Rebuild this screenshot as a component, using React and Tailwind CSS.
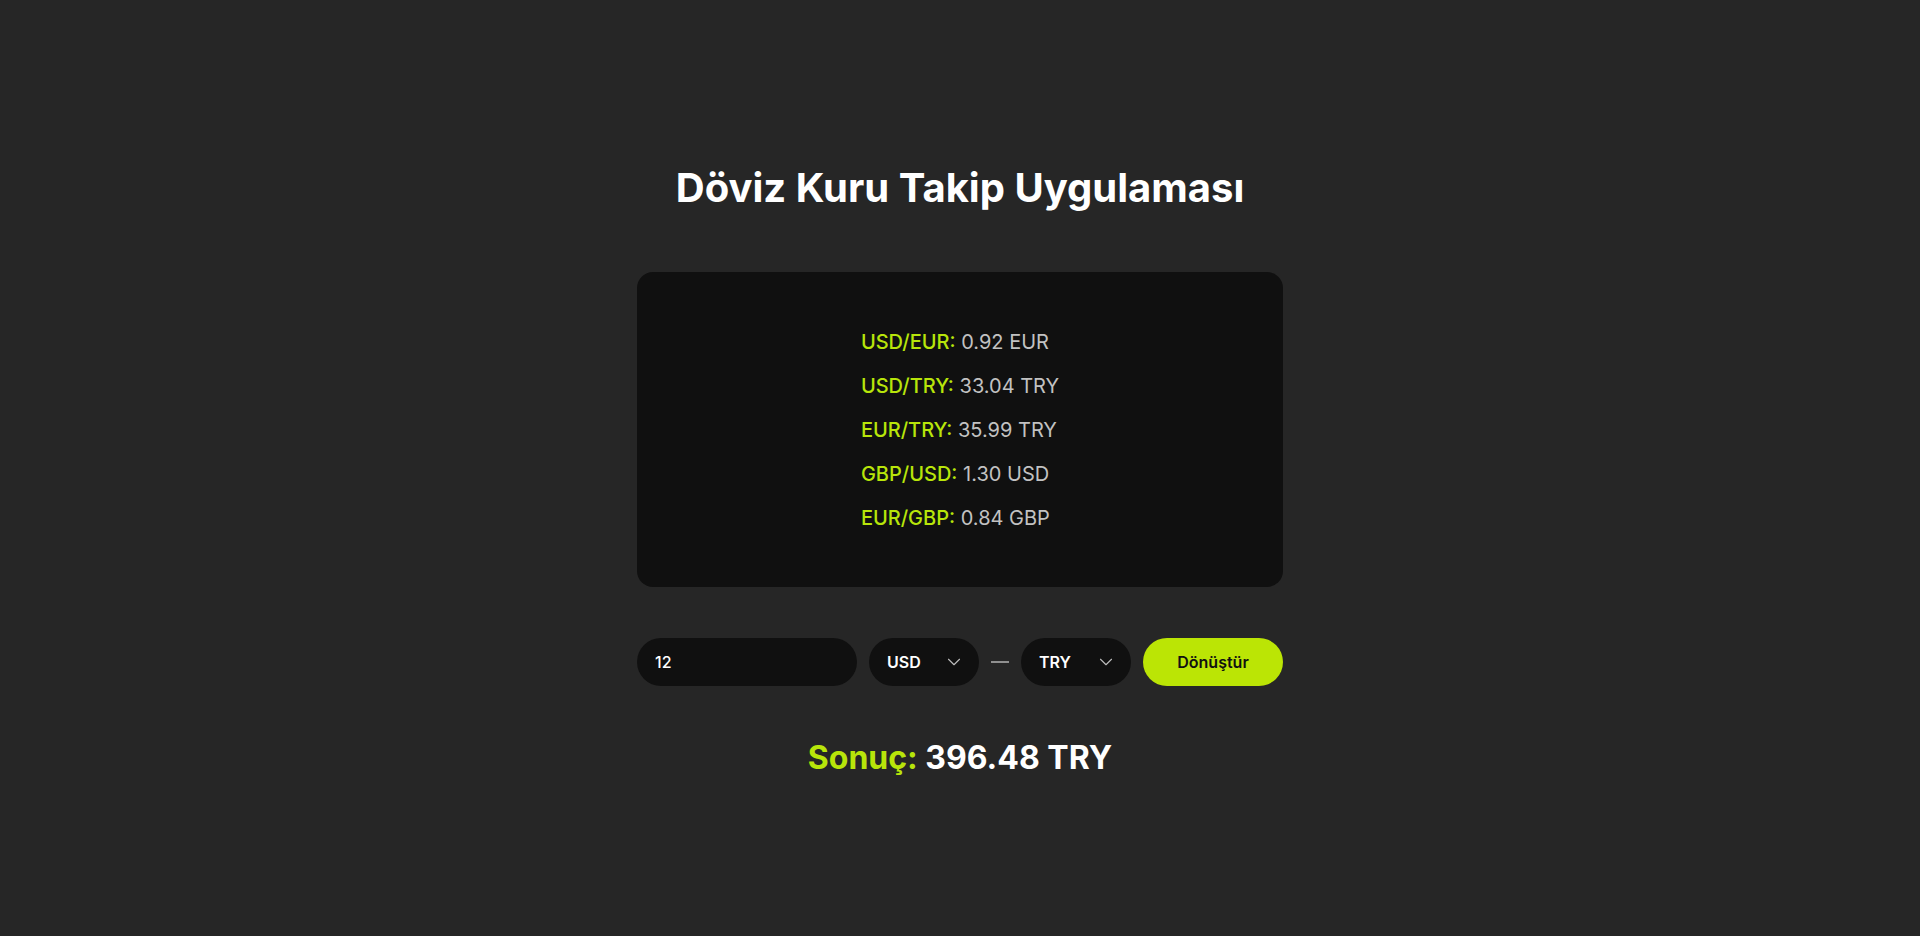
import { useState } from 'react'
import { ChevronDown } from 'lucide-react'

const rates = [
  { pair: 'USD/EUR', value: '0.92 EUR' },
  { pair: 'USD/TRY', value: '33.04 TRY' },
  { pair: 'EUR/TRY', value: '35.99 TRY' },
  { pair: 'GBP/USD', value: '1.30 USD' },
  { pair: 'EUR/GBP', value: '0.84 GBP' },
]

const currencies = ['USD', 'EUR', 'TRY', 'GBP']

function CurrencySelect({ value, onChange }) {
  return (
    <div className="relative h-12 w-[110px] shrink-0">
      <select
        value={value}
        onChange={(e) => onChange(e.target.value)}
        className="h-full w-full appearance-none rounded-full bg-[#101010] pl-[18px] text-[16px] font-semibold text-white outline-none"
      >
        {currencies.map((c) => (
          <option key={c} value={c}>
            {c}
          </option>
        ))}
      </select>
      <ChevronDown
        size={22}
        strokeWidth={1.2}
        className="pointer-events-none absolute right-[14px] top-[13px] text-[#bdbdbd]"
      />
    </div>
  )
}

export default function App() {
  const [amount, setAmount] = useState('12')
  const [from, setFrom] = useState('USD')
  const [to, setTo] = useState('TRY')

  return (
    <div className="min-h-screen bg-[#262626] font-['Inter','Liberation_Sans',sans-serif]">
      <div className="mx-auto flex w-[646px] flex-col items-center pt-[168px]">
        <h1 className="text-[40px] font-bold leading-[40px] text-white">Döviz Kuru Takip Uygulaması</h1>

        <div className="mt-[64px] flex h-[315px] w-full items-center justify-center rounded-2xl bg-[#101010]">
          <div className="flex flex-col">
            {rates.map((r) => (
              <p key={r.pair} className="py-2 text-[20px] leading-[28px]">
                <span className="font-medium text-[#b8e50a]">{r.pair}:</span>{' '}
                <span className="text-[#c2c2c2]">{r.value}</span>
              </p>
            ))}
          </div>
        </div>

        <div className="mt-[51px] flex h-12 w-full items-center gap-3">
          <input
            value={amount}
            onChange={(e) => setAmount(e.target.value)}
            className="h-12 min-w-0 flex-1 rounded-full bg-[#101010] pl-[18px] text-[16px] font-medium text-white outline-none"
          />
          <CurrencySelect value={from} onChange={setFrom} />
          <span className="h-[2px] w-[18px] shrink-0 bg-[#8f8f8f]" />
          <CurrencySelect value={to} onChange={setTo} />
          <button
            type="button"
            className="h-12 w-[140px] shrink-0 rounded-full bg-[#bbe505] text-[16px] font-semibold text-[#111111]"
          >
            Dönüştür
          </button>
        </div>

        <p className="mt-[54px] text-[32px] font-bold leading-[36px]">
          <span className="text-[#b8e50a]">Sonuç:</span> <span className="text-white">396.48 TRY</span>
        </p>
      </div>
    </div>
  )
}
